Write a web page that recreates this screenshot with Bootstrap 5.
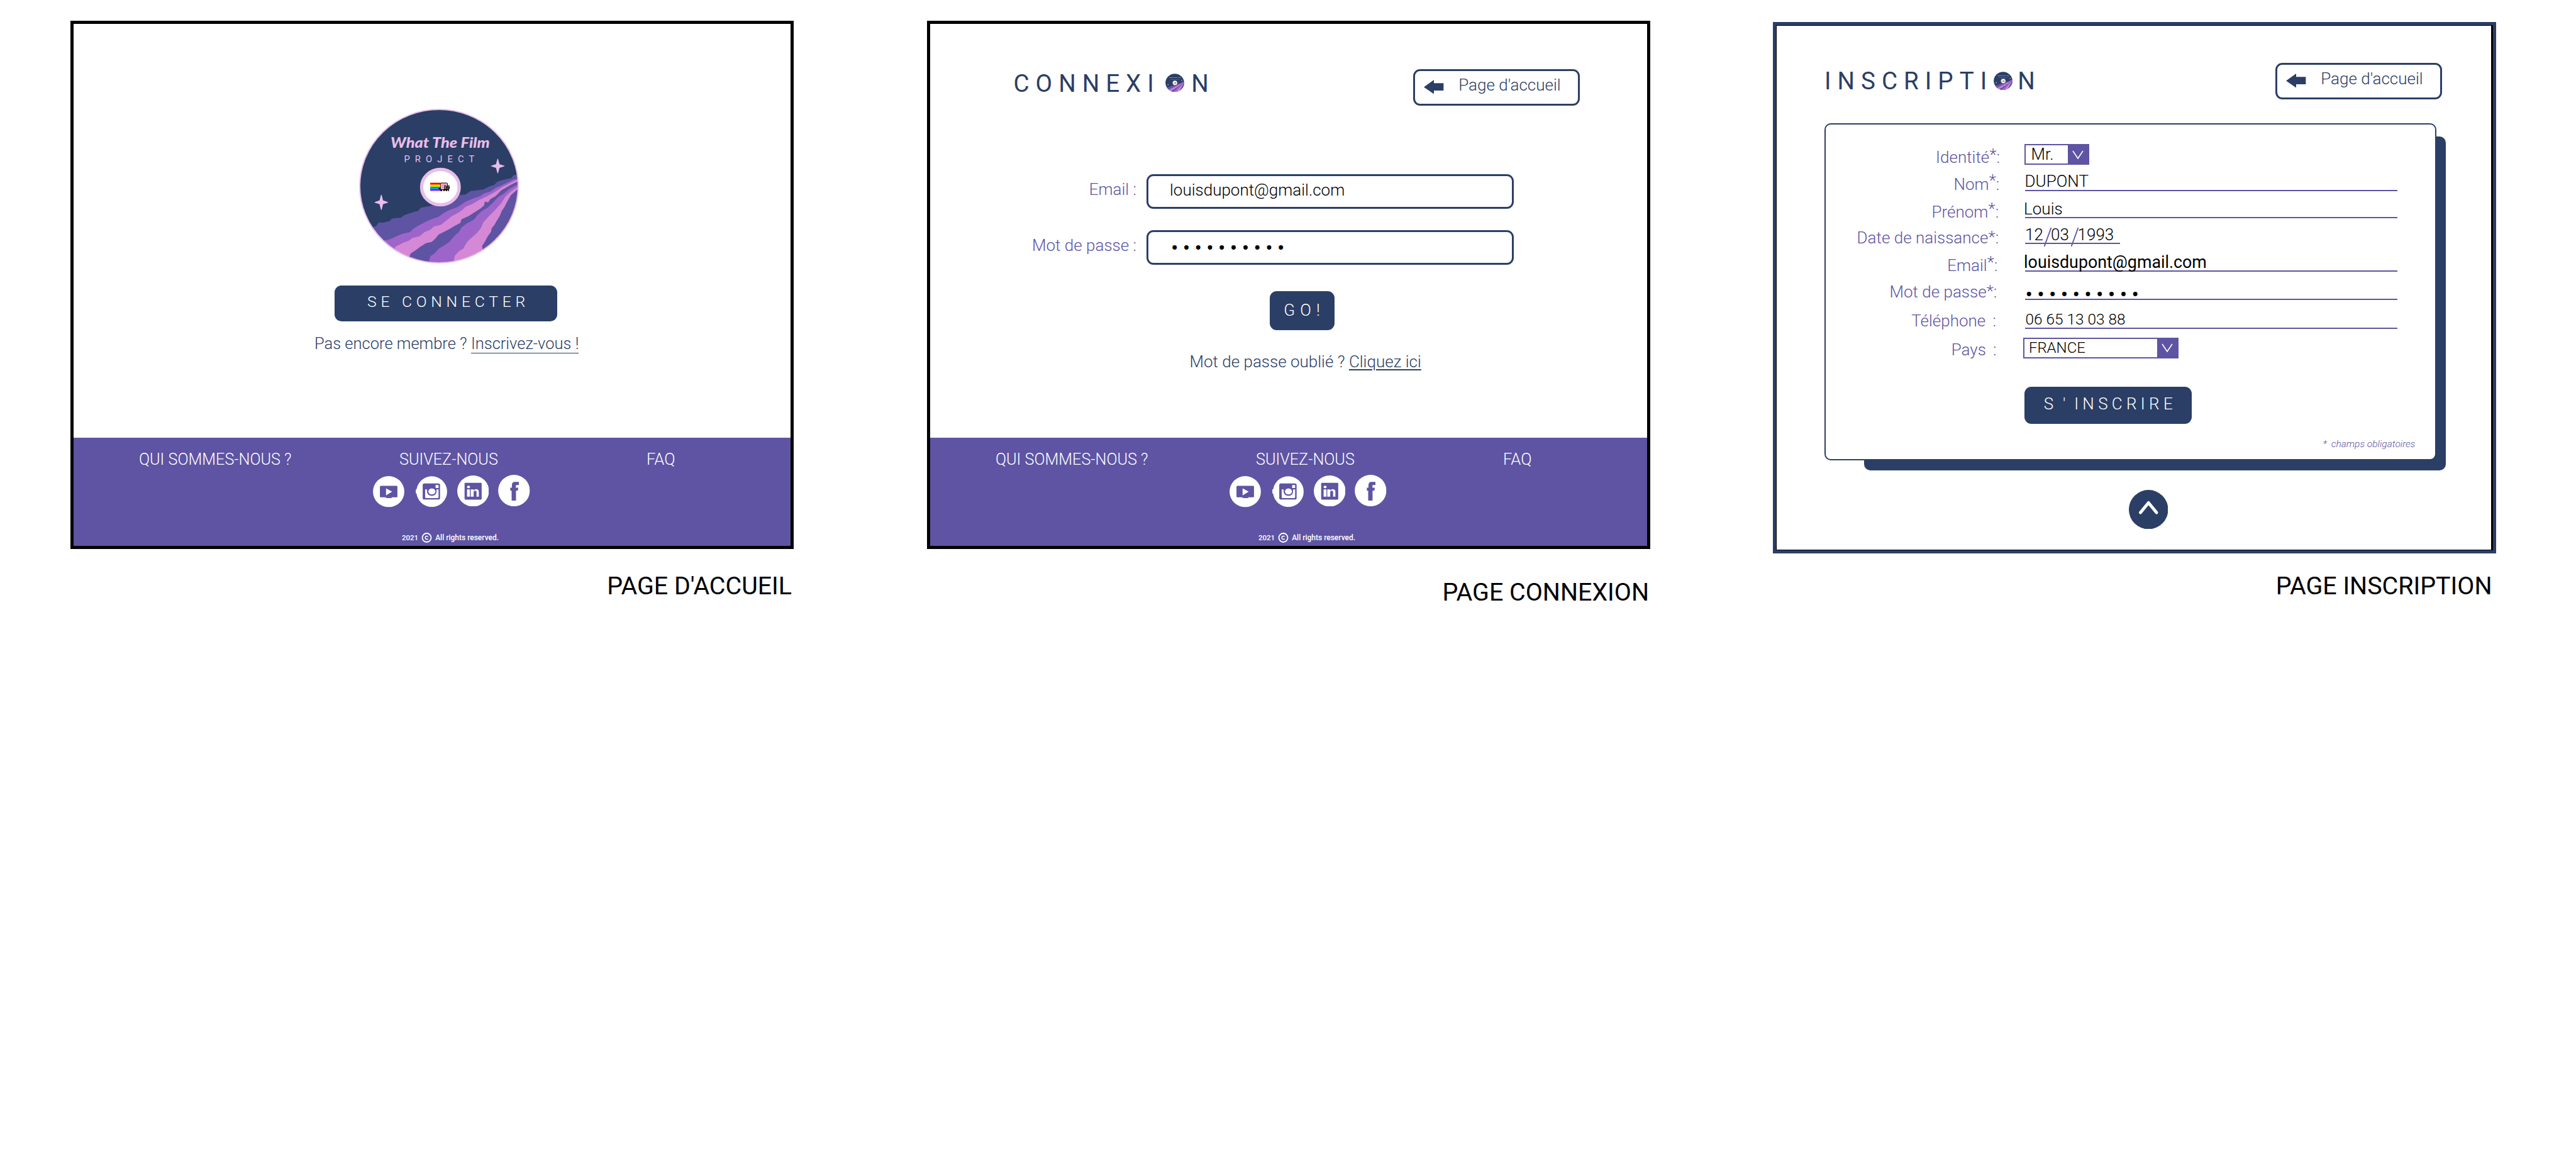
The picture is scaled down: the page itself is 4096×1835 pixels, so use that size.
<!DOCTYPE html>
<html lang="fr">
<head>
<meta charset="utf-8">
<title>What The Film Project</title>
<link rel="stylesheet" href="https://cdn.jsdelivr.net/npm/bootstrap@5.3.0/dist/css/bootstrap.min.css">
<style>
:root{--navy:#2b3e66;--violet:#5e54a3}
body{font-family:Roboto,"Liberation Sans",sans-serif;font-weight:300;font-size:26px;line-height:30px;color:var(--navy);background:#fff;overflow:hidden}
svg{display:block;flex:none}
a{color:inherit}
.boards{padding:33px 0 0 111.5px}
.artboard{width:1150px}
.artboard+.artboard{margin-left:212px}
.artboard.signup{margin-left:195px;margin-top:2px}
.screen{height:840px;border:5px solid #000;background:#fff}
.signup .screen{height:845px;border-color:var(--navy);box-shadow:inset 1px 1px 0 #000,inset -3px -1px 0 #000}
.caption-line{font-size:39.4px;line-height:46px;font-weight:400;color:#000;margin:36px 2.5px 0 0}
.login .caption-line{margin:45.5px 1.5px 0 0}
.signup .caption-line{margin:29px 6px 0 0}
.cta{display:block;background:var(--navy);color:#fff;border-radius:11px;letter-spacing:8.1px;text-decoration:none;white-space:nowrap}
.cta:hover{color:#fff}

.disc{width:254px;height:246px;margin:135px 0 0 454px}
.connect{width:354px;height:57px;margin:34.5px 0 0 415px;padding:11.5px 0 0 52.5px;font-size:24.8px;letter-spacing:6.7px}
.join{margin:20.4px 0 0 383.5px;font-size:25.5px}
.join a{text-decoration:none;border-bottom:1px solid}

.foot{height:172.5px;background:var(--violet);color:#fff;font-size:25.2px;padding:20px 0 0 104.5px}
.foot .who{width:372px}
.foot .follow{width:250px}
.foot .follow-title{padding-left:42px}
.foot .faq{margin:-1px 0 0 185px;font-size:25.6px}
.social{margin-top:9px}
.social .yt{margin:2.8px 17.5px 0 0}
.social .ig{margin:2px 16.3px 0 0}
.social .li{margin:1.5px 15px 0 0}
.legal{margin:38px 0 0 46px;font-size:11.5px;line-height:20px;font-weight:500}
.legal .all{font-size:12px}

.head{padding:71.5px 107px 0 133px}
.signup .head{padding:60px 81px 0 77.5px}
.title{font-size:38.6px;line-height:40px;font-weight:400;letter-spacing:10px;margin-top:3.3px}
.signup .title{margin-top:9px}
.title .word{width:241px}
.signup .title .word{width:269px}
.title svg{margin:4.7px 11.7px 0 0}
.signup .title svg{margin-right:8.2px}
.back{width:265px;height:58px;border:3px solid var(--navy);border-radius:11px;padding:7px 0 0 14.6px;text-decoration:none}
.back svg{margin:7px 23.5px 0 0}

.field{margin-top:109.5px}
.field+.field{margin-top:34.3px}
.field label{width:328.5px;margin:9px 16px 0 0;color:var(--violet);text-align:right}
.box{width:584px;height:55px;border:3px solid var(--navy);border-radius:11px;padding:7.3px 0 0 34px;color:#000;line-height:30px}
.dots{letter-spacing:7.3px;font-size:34px;font-weight:400}
.box.dots{padding:9.5px 0 0 36px}
.go{width:103px;height:62px;margin:41.5px 0 0 540px;padding:15.3px 0 0 22.8px}
.forgot{margin:35.5px 0 0 413px}
.forgot a{text-decoration-thickness:1.5px;text-underline-offset:3px}

.panel{position:relative;z-index:0;width:973px;height:536px;margin:37.5px 0 0 77px}
.panel::before{content:"";position:absolute;z-index:-1;left:63px;right:-15px;top:21px;bottom:-16px;background:var(--navy);border-radius:10px}
.sheet{height:536px;border:2px solid var(--navy);border-radius:10px;background:#fff;padding-top:26.7px}
.line{height:var(--h)}
.tag{width:277.4px;padding-right:var(--d,0px);margin:0 40.2px var(--mb) 0;color:var(--violet);text-align:right;white-space:nowrap}
.star{display:inline-block;width:11.2px;height:0;line-height:0;vertical-align:var(--up)}
.val{width:592px;border-bottom:2px solid var(--violet);color:#000;line-height:var(--lh);white-space:nowrap;text-indent:var(--in)}
.l1{--h:40px;--mb:-.7px;--up:4px}
.l2{--h:40px;--mb:-4.3px;--up:6px;--d:.6px;--lh:26.8px;--in:-.5px}
.l3{--h:43px;--mb:-4.4px;--up:5px;--d:1.8px;--lh:26.6px;--in:-2px}
.l4{--h:40.5px;--mb:-5.8px;--up:1px;--d:1.8px;--lh:23.2px}
.l4 .val{width:151px}
.l4 svg{margin-bottom:-6px}
.l5{--h:44.5px;--mb:-4.9px;--up:5px;--d:3.6px;--lh:24.7px;--in:-2px}
.l5 .val{font-size:26.8px;font-weight:400}
.l6{--h:45px;--mb:-1.8px;--up:1px;--d:4.6px;--lh:13px;--in:.4px}
.l7{--h:46px;--mb:-2px;--up:0px;--d:6px;--lh:27.5px;--in:.5px}
.l7 .val{font-size:24.4px}
.l8{--h:47px;--mb:-.4px;--up:0px;--d:5.4px}
.pick{height:33px;border:2px solid var(--violet);color:#000}
.pick .arrow{width:32px;background:var(--violet)}
.mr{width:103px;margin:0 0 2px -1px;padding-left:8.5px;line-height:28px}
.fr{width:247px;margin:0 0 .6px -3px;padding-left:6.8px;line-height:28.6px;font-size:24px}
.signup .send{width:266.5px;height:59.5px;margin:44.8px 0 0 316.3px;padding:12.3px 0 0 30.9px;letter-spacing:6.3px}
.send .apos{margin:0 7.5px 0 8.5px}
.note{margin:21.5px 31px 0 0;font-size:15.5px;line-height:20px;font-style:italic;color:var(--violet)}
.note .ref{margin-right:3px}
.totop{margin:47px 0 0 561px}
</style>
</head>
<body>
<svg width="0" height="0" class="position-absolute">
<defs>
<clipPath id="round"><ellipse cx="703.5" cy="649" rx="580" ry="562"/></clipPath>
<symbol id="cd" viewBox="117 80 1173 1138" preserveAspectRatio="none">
<g clip-path="url(#round)">
<rect x="117" y="80" width="1173" height="1138" fill="#2b3e66"/>
<path fill="#5e54a3" d="M200 965 222 948 240 945 262 915 290 918 345 905 350 893 370 885 425 880 450 862 490 848 530 835 550 832 570 808 610 800 650 792 720 775 850 715 900 710 935 685 980 680 1030 673 1070 652 1110 640 1130 618 1165 605 1235 590 1250 568 1300 563V1230H200Z"/>
<path fill="#9d65c9" d="M290 1052 345 1040 395 1016 440 998 490 988 515 962 550 940 600 915 640 895 700 875 740 846 780 825 830 808 860 790 900 762 960 738 1000 725 1040 700 1080 690 1120 662 1160 645 1250 600 1300 590V700L600 1230H350Z"/>
<path fill="#d588d5" d="M370 1130 382 1095 410 1082 440 1065 480 1052 510 1030 560 1018 600 985 640 970 665 946 720 932 760 900 800 868 840 848 870 828 900 800 950 780 1000 750 1060 722 1100 700 1180 650 1300 590V640L600 1230H400Z"/>
<path fill="#5e54a3" d="M480 1185 495 1145 530 1122 565 1095 610 1068 650 1060 680 1032 700 1005 740 985 780 965 820 940 860 920 870 892 920 870 960 845 1010 812 1035 790 1040 762 1065 768 1080 745 1120 722 1160 680 1230 640 1300 605V1230H480Z"/>
<path fill="#9d65c9" d="M625 1230 640 1165 670 1145 700 1110 740 1086 780 1060 815 1018 850 985 870 952 905 925 960 895 990 858 1020 830 1060 808 1100 770 1140 728 1180 705 1220 670 1300 625V1230Z"/>
<path fill="#d588d5" d="M805 1230 820 1160 850 1128 880 1110 910 1060 935 1035 975 1000 1010 960 1030 915 1070 870 1110 830 1160 775 1190 728 1230 690 1300 640V680L1030 1230Z"/>
<path fill="#5e54a3" d="M1027 1125 1020 1090 1040 1058 1060 1020 1085 985 1090 960 1112 932 1130 900 1150 868 1165 830 1185 802 1200 770 1232 715 1300 655V1230H1050Z"/>
<path d="M1135 450 1146 490 1182 501 1146 512 1135 552 1124 512 1088 501 1124 490ZM280 714 291 756 327 768 291 780 280 822 269 780 233 768 269 756Z" fill="#e9bee9" stroke="#e9bee9" stroke-width="5" stroke-linejoin="round"/>
</g>
<ellipse cx="714" cy="656" rx="138" ry="130.500" fill="#fff" stroke="#e9bee9" stroke-width="24"/>
<g>
<path fill="#f00" d="M639 624h77v12h-77z"/><path fill="#f90" d="M639 635h77v10h-77z"/><path fill="#ff0" d="M639 643h77v10h-77z"/><path fill="#0b0" d="M639 652h77v12h-77z"/><path fill="#09f" d="M639 663h77v10h-77z"/><path fill="#90f" d="M639 672h77v11h-77z"/>
<path d="M718 624h46v4h4v46h-4v12h-8v-6h-12v6h-8v-8h-10v8h-12v-14h-12v-10h12v-34h4z"/>
<path fill="#f9c08d" d="M720 628h43v44h-46v-40h3z"/><path fill="#f8a0dc" d="M722 634h38v34h-40v-30z"/>
<path fill="#f04fa8" d="M726 640h4v4h-4zm14-4h4v4h-4zm-12 20h4v4h-4zm10 8h4v4h-4z"/>
<path d="M743 642h7l6 6h12l5-6h7v10h3v18h-6v16h-6v-8h-20v-6h-8v-6h-2v-16h2z"/>
<path fill="#888" d="M746 646h3l6 6h14l5-6h3v8h3v16h-31v-4h-5v-12h2z"/>
<path d="M752 656h28v5h-4v5h-7v-5h-5v5h-7v-5h-5z"/>
</g>
<text x="348" y="366" font-family="Lato,sans-serif" font-style="italic" font-weight="900" font-size="101" fill="#e9bee9" textLength="728" lengthAdjust="spacingAndGlyphs">What The Film</text>
<text x="447" y="472" font-family="Roboto,sans-serif" font-weight="400" font-size="68" fill="#e9bee9" letter-spacing="37.500">PROJECT</text>
</symbol>
<symbol id="yt" viewBox="0 0 231 229"><ellipse cx="115.500" cy="114.500" rx="115.500" ry="114.500" fill="#fff"/><rect x="51" y="72" width="129" height="84" rx="7" fill="#5e54a3"/><path fill="#fff" d="M96 90 141 115 96 142z"/><path d="M96 156h42v5H96z" fill="#222"/></symbol>
<symbol id="ig" viewBox="0 0 231 229"><ellipse cx="118" cy="114.500" rx="113" ry="113" fill="#fff"/><path fill="#fff" d="M0 98h12v30H0z"/><rect x="51" y="55" width="128" height="118" rx="12" fill="#5e54a3"/><path fill="#fff" d="M146 66h22v22h-22zM69 99h14q-4 47 36 47 38 0 34-47h15v56q0 7-7 7H76q-7 0-7-7z"/><ellipse cx="119" cy="114" rx="26" ry="22" fill="#fff"/></symbol>
<symbol id="li" viewBox="0 0 234 229"><ellipse cx="117" cy="114.500" rx="117" ry="114.500" fill="#fff"/><rect x="54" y="54" width="126" height="124" rx="5" fill="#5e54a3"/><ellipse cx="83" cy="85" rx="11" ry="10" fill="#fff"/><path fill="#fff" d="M72 103h21v53H72zM99 103h22v8q8-10 20-10 18 2 18 20v35h-17v-36q-2-7-10-7-9 0-11 8v35H99z"/></symbol>
<symbol id="fb" viewBox="0 0 233 232"><ellipse cx="116.500" cy="116" rx="116.500" ry="116" fill="#fff"/><path fill="#5e54a3" d="M99 190v-73H89V95h12V76q0-24 22-24h29v23h-18q-4 1-4 7v13h18l-4 22h-13v73z"/></symbol>
<symbol id="left" viewBox="0 0 146 104"><path fill="#2b3e66" d="M0 53 74 0V24H146V78H74V104Z"/></symbol>
</defs>
</svg>

<main class="boards d-flex align-items-start">

<section class="artboard">
<div class="screen d-flex flex-column align-items-start">
<svg class="disc" viewBox="0 0 254 246"><use href="#cd" width="254" height="246"/><ellipse cx="127" cy="123" rx="126" ry="122" fill="none" stroke="#e9bee9" stroke-width="2"/></svg>
<a href="#" class="cta connect">SE CONNECTER</a>
<p class="join mb-0">Pas encore membre ? <a href="#">Inscrivez-vous !</a></p>
<footer class="foot d-flex align-items-start w-100 mt-auto">
<div class="who">QUI SOMMES-NOUS ?</div>
<div class="follow">
<div class="follow-title">SUIVEZ-NOUS</div>
<div class="social d-flex"><svg class="yt" width="50" height="49.400"><use href="#yt"/></svg><svg class="ig" width="50" height="49.400"><use href="#ig"/></svg><svg class="li" width="50.600" height="49.400"><use href="#li"/></svg><svg width="50.600" height="50.200"><use href="#fb"/></svg></div>
<div class="legal d-flex align-items-center text-nowrap"><span>2021</span><svg class="mx-1" width="19" height="16" viewBox="0 0 19 16"><circle cx="9.500" cy="8" r="7" fill="none" stroke="#fff" stroke-width="1.800"/><path d="M11.800 6.400a2.600 2.600 0 1 0 0 3.200" fill="none" stroke="#fff" stroke-width="1.500"/></svg><span class="all">All rights reserved.</span></div>
</div>
<div class="faq">FAQ</div>
</footer>
</div>
<p class="caption-line text-end">PAGE D'ACCUEIL</p>
</section>

<section class="artboard login">
<div class="screen d-flex flex-column align-items-start">
<header class="head d-flex justify-content-between align-items-start w-100">
<h1 class="title d-flex mb-0"><span class="word">CONNEXI</span><svg width="30" height="29.200"><use href="#cd"/></svg><span>N</span></h1>
<a href="#" class="back d-flex align-items-start"><svg width="31.600" height="22.500"><use href="#left"/></svg>Page d'accueil</a>
</header>
<div class="field d-flex"><label>Email :</label><div class="box">louisdupont@gmail.com</div></div>
<div class="field d-flex"><label>Mot de passe :</label><div class="box dots">••••••••••</div></div>
<a href="#" class="cta go">GO!</a>
<p class="forgot mb-0">Mot de passe oublié ? <a href="#">Cliquez ici</a></p>
<footer class="foot d-flex align-items-start w-100 mt-auto">
<div class="who">QUI SOMMES-NOUS ?</div>
<div class="follow">
<div class="follow-title">SUIVEZ-NOUS</div>
<div class="social d-flex"><svg class="yt" width="50" height="49.400"><use href="#yt"/></svg><svg class="ig" width="50" height="49.400"><use href="#ig"/></svg><svg class="li" width="50.600" height="49.400"><use href="#li"/></svg><svg width="50.600" height="50.200"><use href="#fb"/></svg></div>
<div class="legal d-flex align-items-center text-nowrap"><span>2021</span><svg class="mx-1" width="19" height="16" viewBox="0 0 19 16"><circle cx="9.500" cy="8" r="7" fill="none" stroke="#fff" stroke-width="1.800"/><path d="M11.800 6.400a2.600 2.600 0 1 0 0 3.200" fill="none" stroke="#fff" stroke-width="1.500"/></svg><span class="all">All rights reserved.</span></div>
</div>
<div class="faq">FAQ</div>
</footer>
</div>
<p class="caption-line text-end">PAGE CONNEXION</p>
</section>

<section class="artboard signup">
<div class="screen d-flex flex-column align-items-start">
<header class="head d-flex justify-content-between align-items-start w-100">
<h1 class="title d-flex mb-0"><span class="word">INSCRIPTI</span><svg width="30" height="29.200"><use href="#cd"/></svg><span>N</span></h1>
<a href="#" class="back d-flex align-items-start"><svg width="31.600" height="22.500"><use href="#left"/></svg>Page d'accueil</a>
</header>
<div class="panel"><div class="sheet">
<div class="line l1 d-flex align-items-end"><div class="tag">Identité<span class="star">*</span>:</div><div class="pick mr d-flex justify-content-between"><span>Mr.</span><span class="arrow d-flex align-items-center justify-content-center"><svg width="18" height="14" viewBox="0 0 18 14"><path d="M1 1 9 13 17 1" fill="none" stroke="#fff" stroke-width="1.600"/></svg></span></div></div>
<div class="line l2 d-flex align-items-end"><div class="tag">Nom<span class="star">*</span>:</div><div class="val">DUPONT</div></div>
<div class="line l3 d-flex align-items-end"><div class="tag">Prénom<span class="star">*</span>:</div><div class="val">Louis</div></div>
<div class="line l4 d-flex align-items-end"><div class="tag">Date de naissance<span class="star">*</span>:</div><div class="val d-flex align-items-end"><span style="width:30px">12</span><svg width="12" height="30"><path d="M11.500 0 .5 30" stroke="#5e54a3" stroke-width="1.800"/></svg><span style="width:30.500px;text-indent:-1px">03</span><svg width="12" height="30"><path d="M11.500 0 .5 30" stroke="#5e54a3" stroke-width="1.800"/></svg><span style="text-indent:-1px">1993</span></div></div>
<div class="line l5 d-flex align-items-end"><div class="tag">Email<span class="star">*</span>:</div><div class="val">louisdupont@gmail.com</div></div>
<div class="line l6 d-flex align-items-end"><div class="tag">Mot de passe<span class="star">*</span>:</div><div class="val dots">••••••••••</div></div>
<div class="line l7 d-flex align-items-end"><div class="tag">Téléphone<span class="star"></span>:</div><div class="val">06 65 13 03 88</div></div>
<div class="line l8 d-flex align-items-end"><div class="tag">Pays<span class="star"></span>:</div><div class="pick fr d-flex justify-content-between"><span>FRANCE</span><span class="arrow d-flex align-items-center justify-content-center"><svg width="18" height="14" viewBox="0 0 18 14"><path d="M1 1 9 13 17 1" fill="none" stroke="#fff" stroke-width="1.600"/></svg></span></div></div>
<a href="#" class="cta send">S<span class="apos">'</span>INSCRIRE</a>
<p class="note text-end"><span class="ref">*</span> champs obligatoires</p>
</div></div>
<svg class="totop" width="62.500" height="62.500" viewBox="0 0 62.500 62.500"><circle cx="31.250" cy="31.250" r="31.250" fill="#2b3e66"/><path d="M18.500 36 31.250 20.500 44 36" fill="none" stroke="#fff" stroke-width="5" stroke-linecap="round" stroke-linejoin="round"/></svg>
</div>
<p class="caption-line text-end">PAGE INSCRIPTION</p>
</section>
</main>
<script src="https://cdn.jsdelivr.net/npm/bootstrap@5.3.0/dist/js/bootstrap.bundle.min.js"></script>
</body>
</html>
